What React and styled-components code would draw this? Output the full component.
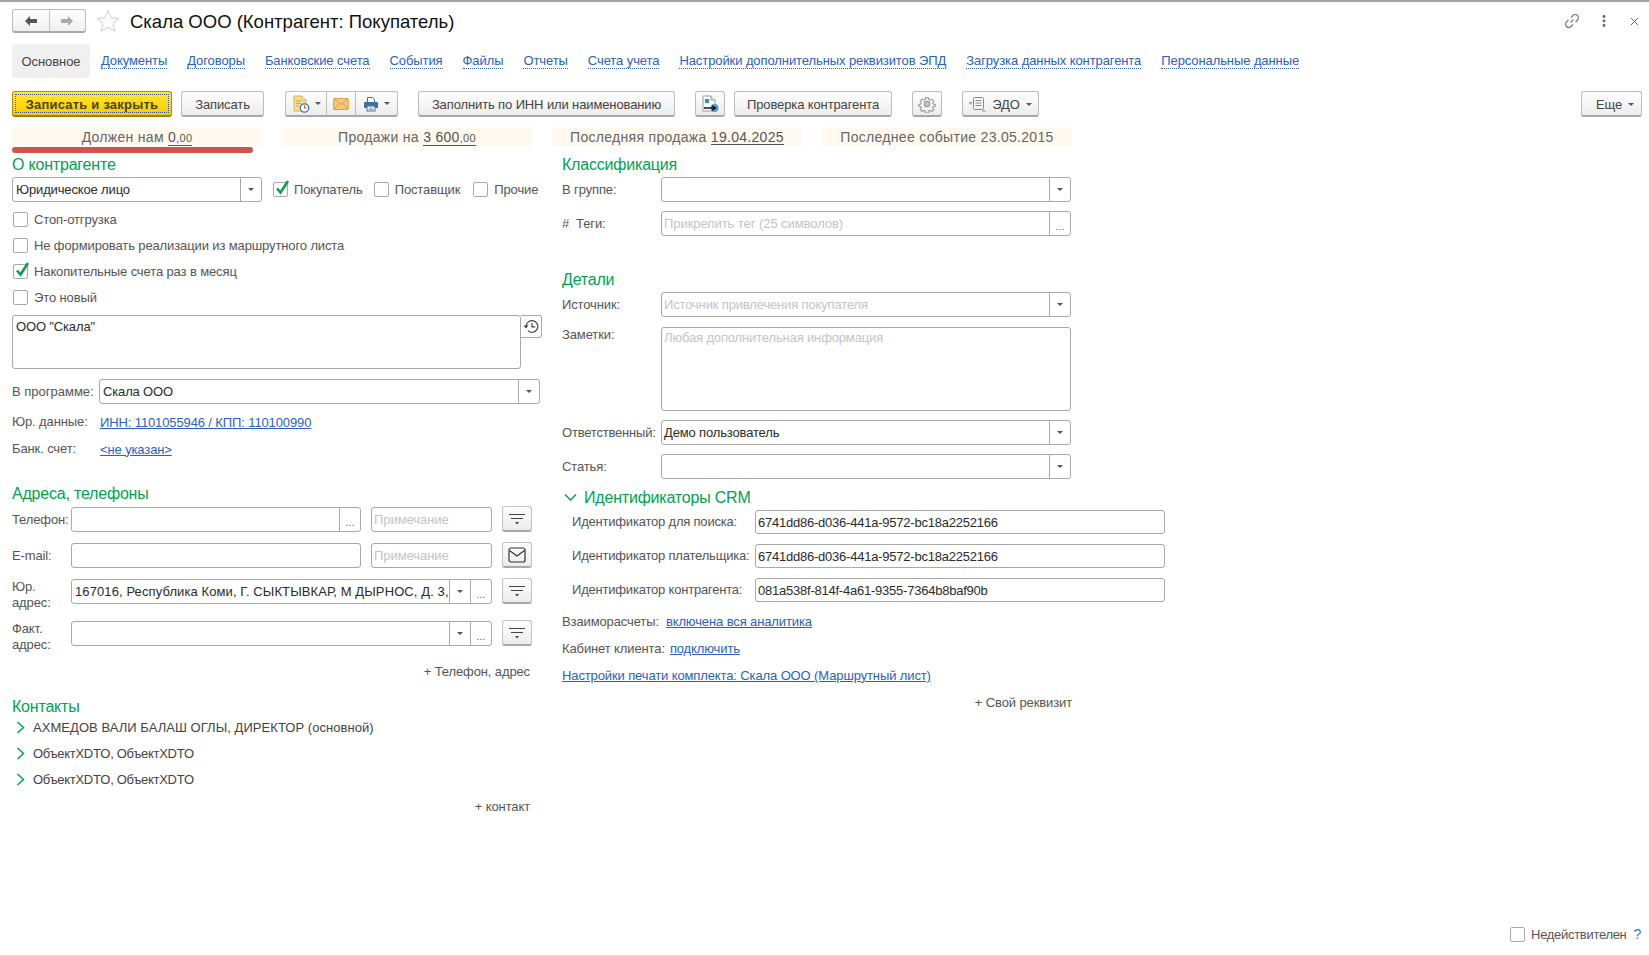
import React from 'react'
import styled, { createGlobalStyle } from 'styled-components'

const Global = createGlobalStyle`
  html, body { margin: 0; padding: 0; background: #fff; }
  body { font-family: "Liberation Sans", Arial, sans-serif; font-size: 13px; letter-spacing: -0.12px; color: #4d4d4d; overflow: hidden; }
  * { box-sizing: border-box; }
`

const Page = styled.div`
  width: 1649px;
  height: 956px;
  display: flex;
  flex-direction: column;
  padding: 0 7px 0 12px;
  border-top: 2px solid #a3a3a3;
  border-bottom: 1px solid #e2e2e2;
`

const Header = styled.div`
  display: flex;
  align-items: center;
  height: 24px;
  margin-top: 7px;
`
const NavGroup = styled.div`
  display: flex;
  width: 74px;
  height: 24px;
  border: 1px solid #bdbdbd;
  border-bottom: 2px solid #a9a9a9;
  border-radius: 3px;
  background: linear-gradient(#fff, #efefef);
`
const NavBtn = styled.div`
  flex: 1;
  display: flex;
  align-items: center;
  justify-content: center;
  & + & { border-left: 1px solid #c4c4c4; }
`
const Star = styled.svg`
  width: 24px;
  height: 24px;
  margin-left: 10px;
`
const Title = styled.div`
  margin-left: 10px;
  font-size: 18.5px;
  letter-spacing: 0;
  color: #111;
  padding-top: 1px;
`
const HeadIcons = styled.div`
  margin-left: auto;
  display: flex;
  align-items: center;
  gap: 22px;
  padding-right: 3px;
`
const DotsIcon = styled.svg`
  margin-right: 2px;
`

const Tabs = styled.div`
  display: flex;
  height: 34px;
  margin-top: 11px;
  align-items: center;
  letter-spacing: -0.09px;
  padding-top: 1px;
`
const ActiveTab = styled.div`
  height: 34px;
  width: 78px;
  margin: -1px 1px 0 0;
  padding-top: 1px;
  display: flex;
  align-items: center;
  justify-content: center;
  background: #f0f0f0;
  border-radius: 3px;
  color: #444;
`
const TabLink = styled.a`
  margin: 0 10px;
  color: #2a5fc4;
  line-height: 14px;
  border-bottom: 1px dotted #2a5fc4;
`

const Toolbar = styled.div`
  display: flex;
  gap: 9px;
  height: 26px;
  margin-top: 13px;
`
const Btn = styled.div`
  width: ${p => p.$w}px;
  margin-left: ${p => (p.$sep ? 11 : 0)}px;
  height: 26px;
  padding-top: 1px;
  display: flex;
  align-items: center;
  justify-content: center;
  gap: 6px;
  border: 1px solid #bcbcbc;
  border-bottom: 2px solid #a8a8a8;
  border-radius: 3px;
  background: linear-gradient(#fff, #ececec);
  color: #444;
  white-space: nowrap;
`
const PrimaryBtn = styled.div`
  width: 160px;
  height: 26px;
  padding: 2px;
  border: 1px solid #a8920a;
  border-bottom: 2px solid #94800a;
  border-radius: 3px;
  background: linear-gradient(#ffe92e, #f7cb00);
`
const PrimaryInner = styled.div`
  height: 100%;
  padding-top: 1px;
  display: flex;
  align-items: center;
  justify-content: center;
  border: 1px dotted #3a4fa0;
  color: #4d4300;
  font-weight: bold;
  letter-spacing: 0.2px;
`
const BtnGroup = styled.div`
  display: flex;
  width: 113px;
  height: 26px;
  margin-left: 12px;
  border: 1px solid #bcbcbc;
  border-bottom: 2px solid #a8a8a8;
  border-radius: 3px;
  background: linear-gradient(#fff, #ececec);
`
const GroupPart = styled.div`
  width: ${p => p.$w}px;
  flex: none;
  display: flex;
  align-items: center;
  justify-content: center;
  gap: 5px;
  & + & { border-left: 1px solid #bcbcbc; }
`
const MoreBtn = styled(Btn)`
  margin-left: auto;
  justify-content: flex-end;
  padding-right: 7px;
`
const Caret = styled.span`
  display: inline-block;
  width: 0;
  height: 0;
  border-left: 3.5px solid transparent;
  border-right: 3.5px solid transparent;
  border-top: 3.5px solid #555;
`

const Stats = styled.div`
  display: grid;
  grid-template-columns: repeat(4, 250px);
  gap: 20px;
  height: 19px;
  margin-top: 10px;
`
const Stat = styled.div`
  background: #fff9ef;
  text-align: center;
  line-height: 21px;
  font-size: 14px;
  letter-spacing: 0.3px;
  color: #666;
  overflow: hidden;
`
const StatValue = styled.span`
  color: #555;
  border-bottom: 1px solid #555;
  line-height: 14px;
  display: inline-block;
  small { font-size: 11px; }
`
const DebtBar = styled.div`
  width: 241px;
  height: 6px;
  margin: 1px 0 1px;
  background: #d0544a;
  border-radius: 3px;
`

const Columns = styled.div`
  display: flex;
  flex: 1;
  gap: 20px;
`
const Col = styled.div`
  width: ${p => p.$w}px;
  display: flex;
  flex-direction: column;
`
const SectionTitle = styled.div`
  height: 20px;
  line-height: 22px;
  font-size: 16px;
  letter-spacing: -0.2px;
  color: #00a24f;
  margin-top: ${p => p.$mt || 0}px;
  flex: none;
`
const Row = styled.div`
  display: flex;
  align-items: ${p => p.$top ? 'flex-start' : 'center'};
  margin-top: ${p => p.$mt || 0}px;
  flex: none;
`
const Field = styled.div`
  width: ${p => p.$w}px;
  height: ${p => p.$h || 25}px;
  margin-left: ${p => p.$ml || 0}px;
  flex: none;
  display: flex;
  border: 1px solid #a9a9a9;
  border-radius: 3px;
  background: #fff;
`
const FieldText = styled.div`
  flex: 1;
  min-width: 0;
  padding: ${p => (p.$area ? (p.$ph ? 2 : 3) : 0)}px 2px 0 ${p => p.$pl || 2}px;
  line-height: ${p => (p.$area ? '16px' : '23px')};
  letter-spacing: ${p => (p.$ls !== undefined ? p.$ls : -0.15)}px;
  color: ${p => (p.$ph ? '#c4c4c4' : '#2b2b2b')};
  white-space: nowrap;
  overflow: hidden;
`
const FieldBtn = styled.div`
  width: ${p => p.$w || 21}px;
  flex: none;
  display: flex;
  align-items: center;
  justify-content: center;
  border-left: 1px solid #a9a9a9;
  color: #555;
  font-size: 10px;
  line-height: 1;
`
const Dots = styled.span`
  position: relative;
  top: 3px;
  letter-spacing: 0.3px;
`
const Label = styled.div`
  width: ${p => p.$w}px;
  flex: none;
  color: #555;
  line-height: ${p => (p.$lh ? p.$lh : 16)}px;
  letter-spacing: ${p => (p.$ls !== undefined ? p.$ls : -0.12)}px;
`
const Check = styled.span`
  position: relative;
  width: 15px;
  height: 15px;
  flex: none;
  border: 1px solid #a9a9a9;
  border-radius: 2px;
  background: #fff;
  margin-left: ${p => p.$ml || 0}px;
`
const CheckMark = styled.svg`
  position: absolute;
  left: 0;
  top: -4px;
  width: 16px;
  height: 16px;
`
const CheckText = styled.span`
  margin-left: 6px;
  color: #555;
`
const CheckRow = styled.div`
  display: flex;
  align-items: center;
  height: 26px;
  padding-left: 1px;
  margin-top: ${p => p.$mt || 0}px;
  flex: none;
`
const SideBtn = styled.div`
  width: 21px;
  height: 23px;
  flex: none;
  display: flex;
  align-items: center;
  justify-content: center;
  border: 1px solid #a9a9a9;
  border-left: none;
  border-radius: 0 3px 3px 0;
`
const Link = styled.a`
  color: #2a5fc4;
  text-decoration: underline;
  margin-left: ${p => p.$ml || 0}px;
`
const TextRow = styled.div`
  display: flex;
  align-items: center;
  height: 22px;
  margin-top: ${p => p.$mt || 0}px;
  flex: none;
  color: #555;
`
const IconBtn = styled.div`
  width: 30px;
  height: 26px;
  margin-left: 10px;
  margin-top: -1px;
  flex: none;
  display: flex;
  align-items: center;
  justify-content: center;
  border: 1px solid #c2c2c2;
  border-bottom: 2px solid #a8a8a8;
  border-radius: 3px;
  background: linear-gradient(#fff, #ececec);
`
const AddLink = styled.div`
  width: ${p => p.$w}px;
  height: 20px;
  line-height: 20px;
  text-align: right;
  margin-top: ${p => p.$mt || 0}px;
  flex: none;
  color: #555;
`
const ContactRow = styled.div`
  display: flex;
  align-items: center;
  height: 22px;
  margin-top: ${p => p.$mt || 0}px;
  padding-left: 4px;
  gap: 8px;
  color: #444;
  letter-spacing: ${p => p.$ls}px;
  flex: none;
`
const CrmTitle = styled.div`
  display: flex;
  align-items: center;
  gap: 7px;
  height: 20px;
  margin-top: 8px;
  padding: 1px 0 0 2px;
  font-size: 16px;
  letter-spacing: -0.2px;
  color: #00a24f;
  flex: none;
`
const IdRow = styled(Row)`
  padding-left: 10px;
`
const Footer = styled.div`
  display: flex;
  justify-content: flex-end;
  align-items: center;
  padding: 0 1px 13px 0;
  color: #555;
  letter-spacing: -0.3px;
`
const Help = styled.span`
  margin-left: 7px;
  color: #1c7fc9;
  font-size: 14px;
`

const Arrow = ({ color, flip }) => (
  <svg width="14" height="12" viewBox="0 0 14 12" style={flip ? { transform: 'scaleX(-1)' } : undefined}>
    <path d="M6 1 1 6l5 5V8h7V4H6z" fill={color} />
  </svg>
)

const DocClockIcon = () => (
  <svg width="18" height="18" viewBox="0 0 18 18">
    <path d="M2 1h8l4 4v11H2z" fill="#f5dc97" stroke="#d8b45c" />
    <path d="M10 1v4h4" fill="#fff4cf" stroke="#d8b45c" />
    <path d="M4 6h5M4 8.5h5M4 11h3" stroke="#c9a550" />
    <circle cx="12.5" cy="13" r="4.2" fill="#fff" stroke="#3c78b8" strokeWidth="1.3" />
    <path d="M12.5 10.5V13h2" stroke="#d9443a" fill="none" />
  </svg>
)

const MailIcon = () => (
  <svg width="16" height="12" viewBox="0 0 17 13">
    <rect x=".5" y=".5" width="16" height="12" rx="1" fill="#f6c77c" stroke="#d79a3c" />
    <path d="M1 1l7.5 6L16 1M1 12l5.5-6M16 12l-5.5-6" fill="none" stroke="#d79a3c" />
  </svg>
)

const PrinterIcon = () => (
  <svg width="16" height="16" viewBox="0 0 16 16">
    <path d="M4.5 6V1.5h5l2 2V6" fill="#fff" stroke="#44709f" />
    <rect x="1" y="6" width="14" height="6" rx="1" fill="#3f6f9f" />
    <rect x="4" y="10" width="8" height="5" fill="#fff" stroke="#44709f" />
    <path d="M5.5 12h5M5.5 13.5h5" stroke="#8aa7c4" />
  </svg>
)

const DocArrowIcon = () => (
  <svg width="18" height="18" viewBox="0 0 18 18">
    <path d="M2 1h8l4 4v11H2z" fill="#fff" stroke="#999" />
    <path d="M10 1v4h4" fill="#e8eef4" stroke="#999" />
    <rect x="4" y="4" width="4" height="4" fill="#2f8fd0" />
    <circle cx="13.5" cy="13" r="4" fill="#4f9fd6" />
    <path d="M3 13h11M11 10.5l3.5 2.5-3.5 2.5" fill="none" stroke="#111" strokeWidth="1.3" />
  </svg>
)

const GearIcon = () => (
  <svg width="18" height="18" viewBox="0 0 24 24" fill="none" stroke="#9a9a9a" strokeWidth="1.6">
    <path d="M10 2.5h4l.6 3 2 .9 2.6-1.7 2.8 2.8-1.7 2.6.9 2 3 .6v2.600l-3 .6-.9 2 1.7 2.600-2.800 2.800-2.600-1.700-2 .9-.6 3h-4l-.6-3-2-.9-2.600 1.700-2.800-2.800 1.700-2.600-.9-2-3-.6v-2.600l3-.6.9-2-1.700-2.600 2.800-2.800 2.600 1.700 2-.9z" transform="translate(1.2 1.2) scale(.9)" />
    <circle cx="12" cy="12" r="3.6" fill="#c9c9c9" />
  </svg>
)

const EdoIcon = () => (
  <svg width="17" height="16" viewBox="0 0 17 16" fill="none" stroke="#8a8a8a">
    <rect x="4.5" y="1.5" width="10" height="12" rx="1" />
    <path d="M6.5 4.5h6M6.5 7h6M6.5 9.5h6" />
    <path d="M.5 7h3M2 5.5 .5 7 2 8.5M13 15h3.5" />
  </svg>
)

const FilterIcon = () => (
  <svg width="18" height="14" viewBox="0 0 18 14">
    <path d="M1 2.5h16M3 6.5h12" stroke="#444" fill="none" />
    <path d="M7 10h4l-2 2.5z" fill="#444" />
  </svg>
)

const EnvelopeIcon = () => (
  <svg width="18" height="16" viewBox="0 0 18 16" fill="none" stroke="#333" strokeWidth="1.2">
    <rect x="1" y="1" width="16" height="14" rx="2" />
    <path d="M1.5 3.5 9 9l7.5-5.500" />
  </svg>
)

const HistoryIcon = () => (
  <svg width="16" height="15" viewBox="0 0 16 15" fill="none" stroke="#444">
    <path d="M3.2 7.5a5.800 5.800 0 1 1 1.700 4.100" strokeWidth="1.2" />
    <path d="M.5 6.5h5L3 9.5z" fill="#444" stroke="none" />
    <path d="M9 4v3.800h3.200" strokeWidth="1.2" />
  </svg>
)

const Chevron = () => (
  <svg width="9" height="13" viewBox="0 0 9 13" fill="none" stroke="#00a24f" strokeWidth="1.5">
    <path d="M1.5 1 7.5 6.500 1.5 12" />
  </svg>
)

const Tick = () => (
  <CheckMark viewBox="0 0 16 16" fill="none" stroke="#0aa04f" strokeWidth="2.6">
    <path d="M3 9.5 6.5 13.500 14 2" />
  </CheckMark>
)

const Select = ({ w, ml, ph, pl, children }) => (
  <Field $w={w} $ml={ml}>
    <FieldText $ph={ph} $pl={pl}>{children}</FieldText>
    <FieldBtn><Caret /></FieldBtn>
  </Field>
)

const tabs = [
  'Документы', 'Договоры', 'Банковские счета', 'События', 'Файлы', 'Отчеты', 'Счета учета',
  'Настройки дополнительных реквизитов ЭПД', 'Загрузка данных контрагента', 'Персональные данные',
]

function App() {
  return (
    <Page>
      <Global />
      <Header>
        <NavGroup>
          <NavBtn><Arrow color="#555" /></NavBtn>
          <NavBtn><Arrow color="#aaa" flip /></NavBtn>
        </NavGroup>
        <Star viewBox="0 0 24 24">
          <path d="M12 1.5l3.100 7.200 7.800.7-5.900 5.200 1.800 7.700L12 18.200l-6.800 4.100L7 14.600 1.100 9.400l7.800-.7z" fill="#fff" stroke="#cfcfcf" />
        </Star>
        <Title>Скала ООО (Контрагент: Покупатель)</Title>
        <HeadIcons>
          <svg width="16" height="16" viewBox="0 0 16 16" fill="none" stroke="#777" strokeWidth="1.1">
            <path d="M6.5 9.5l3-3M7 4.500l2-2a3 3 0 0 1 4.500 4.500l-2 2M9 11.500l-2 2A3 3 0 0 1 2.500 9l2-2" />
          </svg>
          <DotsIcon width="4" height="12" viewBox="0 0 4 12" fill="#666">
            <circle cx="2" cy="1.5" r="1.4" /><circle cx="2" cy="6" r="1.4" /><circle cx="2" cy="10.5" r="1.4" />
          </DotsIcon>
          <svg width="9" height="9" viewBox="0 0 9 9" stroke="#666" strokeWidth="1">
            <path d="M1 1l7 7M8 1 1 8" />
          </svg>
        </HeadIcons>
      </Header>

      <Tabs>
        <ActiveTab>Основное</ActiveTab>
        {tabs.map(t => <TabLink key={t}>{t}</TabLink>)}
      </Tabs>

      <Toolbar>
        <PrimaryBtn><PrimaryInner>Записать и закрыть</PrimaryInner></PrimaryBtn>
        <Btn $w={83}>Записать</Btn>
        <BtnGroup>
          <GroupPart $w={40}><DocClockIcon /><Caret /></GroupPart>
          <GroupPart $w={29}><MailIcon /></GroupPart>
          <GroupPart $w={41}><PrinterIcon /><Caret /></GroupPart>
        </BtnGroup>
        <Btn $w={257} $sep>Заполнить по ИНН или наименованию</Btn>
        <Btn $w={30} $sep><DocArrowIcon /></Btn>
        <Btn $w={158}>Проверка контрагента</Btn>
        <Btn $w={30} $sep><GearIcon /></Btn>
        <Btn $w={77} $sep><EdoIcon />ЭДО<Caret /></Btn>
        <MoreBtn $w={61}>Еще<Caret /></MoreBtn>
      </Toolbar>

      <Stats>
        <Stat>Должен нам <StatValue>0<small>,00</small></StatValue></Stat>
        <Stat>Продажи на <StatValue>3 600<small>,00</small></StatValue></Stat>
        <Stat>Последняя продажа <StatValue>19.04.2025</StatValue></Stat>
        <Stat>Последнее событие 23.05.2015</Stat>
      </Stats>
      <DebtBar />

      <Columns>
        <Col $w={530}>
          <SectionTitle>О контрагенте</SectionTitle>
          <Row $mt={3}>
            <Select w={250} pl={3}>Юридическое лицо</Select>
            <Check $ml={11}><Tick /></Check><CheckText>Покупатель</CheckText>
            <Check $ml={11} /><CheckText>Поставщик</CheckText>
            <Check $ml={13} /><CheckText>Прочие</CheckText>
          </Row>
          <CheckRow $mt={4}><Check /><CheckText>Стоп-отгрузка</CheckText></CheckRow>
          <CheckRow><Check /><CheckText>Не формировать реализации из маршрутного листа</CheckText></CheckRow>
          <CheckRow><Check><Tick /></Check><CheckText>Накопительные счета раз в месяц</CheckText></CheckRow>
          <CheckRow><Check /><CheckText>Это новый</CheckText></CheckRow>
          <Row $mt={5} $top>
            <Field $w={509} $h={54}><FieldText $area $pl={3}>ООО "Скала"</FieldText></Field>
            <SideBtn><HistoryIcon /></SideBtn>
          </Row>
          <Row $mt={10}>
            <Label $w={87} $ls={0}>В программе:</Label>
            <Select w={441} pl={3}>Скала ООО</Select>
          </Row>
          <TextRow $mt={7}><Label $w={88}>Юр. данные:</Label><Link>ИНН: 1101055946 / КПП: 110100990</Link></TextRow>
          <TextRow $mt={5}><Label $w={88}>Банк. счет:</Label><Link>&lt;не указан&gt;</Link></TextRow>

          <SectionTitle $mt={23}>Адреса, телефоны</SectionTitle>
          <Row $mt={4} $top>
            <Label $w={59} $lh={25}>Телефон:</Label>
            <Field $w={290}><FieldText /><FieldBtn><Dots>...</Dots></FieldBtn></Field>
            <Field $w={121} $ml={10}><FieldText $ph $ls={-0.05}>Примечание</FieldText></Field>
            <IconBtn><FilterIcon /></IconBtn>
          </Row>
          <Row $mt={11} $top>
            <Label $w={59} $lh={25}>E-mail:</Label>
            <Field $w={290}><FieldText /></Field>
            <Field $w={121} $ml={10}><FieldText $ph $ls={-0.05}>Примечание</FieldText></Field>
            <IconBtn><EnvelopeIcon /></IconBtn>
          </Row>
          <Row $mt={11} $top>
            <Label $w={59}>Юр.<br />адрес:</Label>
            <Field $w={421}>
              <FieldText $pl={3} $ls={0.1}>167016, Республика Коми, Г. СЫКТЫВКАР, М ДЫРНОС, Д. 3, </FieldText>
              <FieldBtn><Caret /></FieldBtn>
              <FieldBtn><Dots>...</Dots></FieldBtn>
            </Field>
            <IconBtn><FilterIcon /></IconBtn>
          </Row>
          <Row $mt={10} $top>
            <Label $w={59}>Факт.<br />адрес:</Label>
            <Field $w={421}>
              <FieldText />
              <FieldBtn><Caret /></FieldBtn>
              <FieldBtn><Dots>...</Dots></FieldBtn>
            </Field>
            <IconBtn><FilterIcon /></IconBtn>
          </Row>
          <AddLink $w={518} $mt={9}>+ Телефон, адрес</AddLink>

          <SectionTitle $mt={14}>Контакты</SectionTitle>
          <ContactRow $ls={0.05}><Chevron />АХМЕДОВ ВАЛИ БАЛАШ ОГЛЫ, ДИРЕКТОР (основной)</ContactRow>
          <ContactRow $mt={4} $ls={-0.3}><Chevron />ОбъектXDTO, ОбъектXDTO</ContactRow>
          <ContactRow $mt={4} $ls={-0.3}><Chevron />ОбъектXDTO, ОбъектXDTO</ContactRow>
          <AddLink $w={518} $mt={7}>+ контакт</AddLink>
        </Col>

        <Col $w={610}>
          <SectionTitle>Классификация</SectionTitle>
          <Row $mt={3}>
            <Label $w={99}>В группе:</Label>
            <Select w={410} />
          </Row>
          <Row $mt={9}>
            <Label $w={99}>#&nbsp;&nbsp;Теги:</Label>
            <Field $w={410}><FieldText $ph $ls={-0.07}>Прикрепить тег (25 символов)</FieldText><FieldBtn><Dots>...</Dots></FieldBtn></Field>
          </Row>

          <SectionTitle $mt={33}>Детали</SectionTitle>
          <Row $mt={3}>
            <Label $w={99}>Источник:</Label>
            <Select w={410} ph>Источник привлечения покупателя</Select>
          </Row>
          <Row $mt={10} $top>
            <Label $w={99}>Заметки:</Label>
            <Field $w={410} $h={84}><FieldText $area $ph>Любая дополнительная информация</FieldText></Field>
          </Row>
          <Row $mt={9}>
            <Label $w={99} $ls={-0.2}>Ответственный:</Label>
            <Select w={410}>Демо пользователь</Select>
          </Row>
          <Row $mt={9}>
            <Label $w={99}>Статья:</Label>
            <Select w={410} />
          </Row>

          <CrmTitle>
            <svg width="13" height="9" viewBox="0 0 13 9" fill="none" stroke="#00a24f" strokeWidth="1.5">
              <path d="M1 1.5 6.500 7 12 1.500" />
            </svg>
            Идентификаторы CRM
          </CrmTitle>
          <IdRow $mt={3}>
            <Label $w={183} $ls={-0.2}>Идентификатор для поиска:</Label>
            <Field $w={410} $h={24}><FieldText $ls={-0.23}>6741dd86-d036-441a-9572-bc18a2252166</FieldText></Field>
          </IdRow>
          <IdRow $mt={10}>
            <Label $w={183} $ls={-0.2}>Идентификатор плательщика:</Label>
            <Field $w={410} $h={24}><FieldText $ls={-0.23}>6741dd86-d036-441a-9572-bc18a2252166</FieldText></Field>
          </IdRow>
          <IdRow $mt={10}>
            <Label $w={183} $ls={-0.2}>Идентификатор контрагента:</Label>
            <Field $w={410} $h={24}><FieldText $ls={-0.23}>081a538f-814f-4a61-9355-7364b8baf90b</FieldText></Field>
          </IdRow>
          <TextRow $mt={8}>Взаиморасчеты:<Link $ml={7}>включена вся аналитика</Link></TextRow>
          <TextRow $mt={5}>Кабинет клиента:<Link $ml={5}>подключить</Link></TextRow>
          <TextRow $mt={5}><Link>Настройки печати комплекта: Скала ООО (Маршрутный лист)</Link></TextRow>
          <AddLink $w={510} $mt={7}>+ Свой реквизит</AddLink>
        </Col>
      </Columns>

      <Footer>
        <Check /><CheckText>Недействителен</CheckText><Help>?</Help>
      </Footer>
    </Page>
  )
}

export default App
